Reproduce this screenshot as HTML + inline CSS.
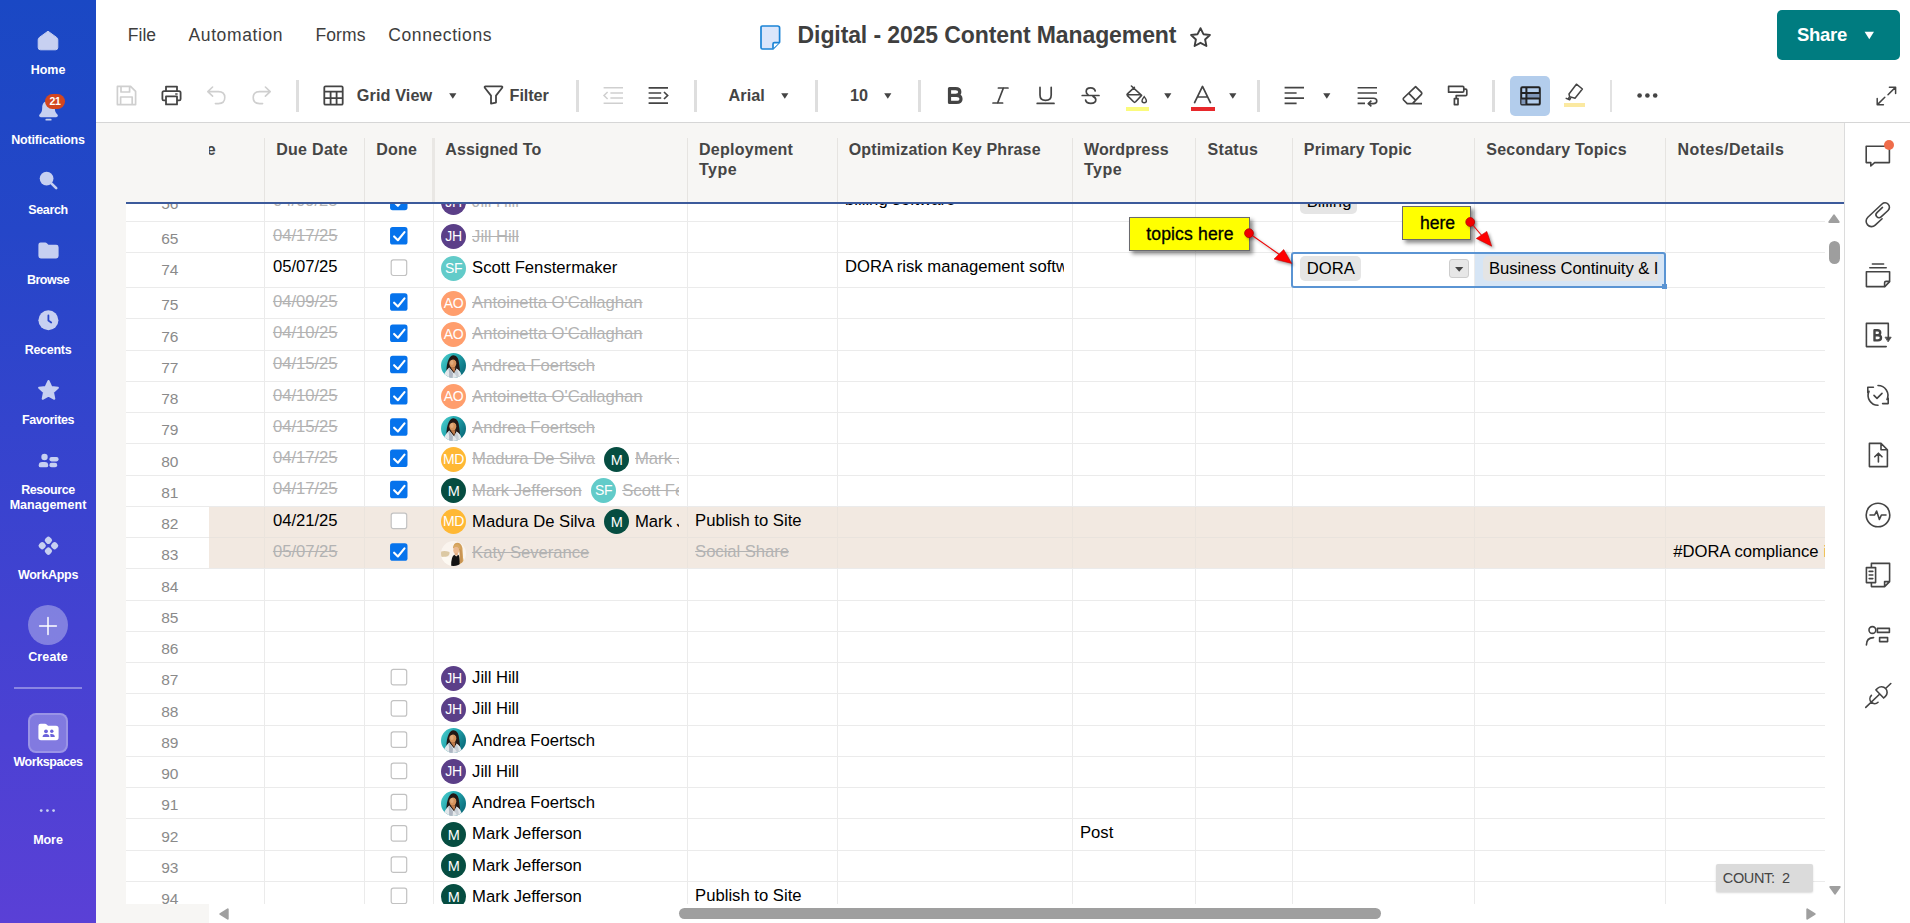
<!DOCTYPE html>
<html><head><meta charset="utf-8"><title>Digital - 2025 Content Management</title>
<style>
*{box-sizing:border-box;margin:0;padding:0}
html,body{width:1910px;height:923px;overflow:hidden;background:#fff;font-family:"Liberation Sans",sans-serif;}
body{position:relative}
.t{position:absolute;white-space:nowrap;line-height:1;}
.a{position:absolute}
.st{text-decoration:line-through}
svg{position:absolute;overflow:visible}
.sep{position:absolute;top:80px;width:3px;height:32px;background:#dedede}
.hl{position:absolute;left:126px;width:1699px;height:1px;background:#ebebeb}
.vl{position:absolute;top:204px;width:1px;height:701px;background:#ebebeb}
.av{position:absolute;width:25px;height:25px;border-radius:50%;color:#fff;font-size:13px;text-align:center;line-height:24.6px;letter-spacing:-0.4px}
.cb{position:absolute;left:390px;width:17.2px;height:17.6px;border-radius:2.5px}
.cb.on{background:#0673ec}
.cb.off{background:#fff;border:1px solid #c9c9c9}
</style></head><body>
<div class="a" style="left:0;top:0;width:96px;height:923px;background:linear-gradient(180deg,#1a48c4 0%,#2546c8 25%,#3a43cf 55%,#4c41d3 80%,#5a40d6 100%)"></div>
<svg style="left:37px;top:30px" width="22" height="21" viewBox="0 0 22 21"><path d="M11 1.2 L19.6 7.4 Q20.8 8.3 20.8 9.8 V17.5 Q20.8 19.8 18.5 19.8 H3.5 Q1.2 19.8 1.2 17.5 V9.8 Q1.2 8.3 2.4 7.4 Z" fill="#c7d0f1" stroke="#c7d0f1" stroke-width="1" stroke-linejoin="round"/></svg>
<span id="t1" class="t " style="left:48.00px;top:64.32px;font-size:12.5px;color:#fff;font-weight:700;letter-spacing:-0.022px;transform:translateX(-50%);">Home</span>
<svg style="left:38px;top:100px" width="21" height="22" viewBox="0 0 21 22"><path d="M10.5 0.8 C6.2 0.8 4.2 4 4.2 7.8 C4.2 11.5 3.2 13 1.6 14.6 C0.6 15.6 1.2 17.2 2.8 17.2 H18.2 C19.8 17.2 20.4 15.6 19.4 14.6 C17.8 13 16.8 11.5 16.8 7.8 C16.8 4 14.8 0.8 10.5 0.8 Z" fill="#c7d0f1"/><rect x="7.4" y="18.7" width="6.2" height="1.9" rx="0.95" fill="#c7d0f1"/></svg>
<div class="a" style="left:45px;top:94px;width:20px;height:15px;border-radius:7.5px;background:#d3461f"></div>
<span id="t2" class="t " style="left:55.00px;top:96.01px;font-size:10.5px;color:#fff;font-weight:700;transform:translateX(-50%);letter-spacing:-0.3px;">21</span>
<span id="t3" class="t " style="left:48.00px;top:134.42px;font-size:12.5px;color:#fff;font-weight:700;letter-spacing:-0.150px;transform:translateX(-50%);">Notifications</span>
<svg style="left:39px;top:171px" width="19" height="19" viewBox="0 0 19 19"><circle cx="7.6" cy="7.6" r="6.9" fill="#c7d0f1"/><path d="M12.6 12.6 L17.2 17.2" stroke="#c7d0f1" stroke-width="2.6" stroke-linecap="round"/></svg>
<span id="t4" class="t " style="left:48.00px;top:204.32px;font-size:12.5px;color:#fff;font-weight:700;letter-spacing:-0.326px;transform:translateX(-50%);">Search</span>
<svg style="left:38px;top:242px" width="21" height="17" viewBox="0 0 21 17"><path d="M2.6 0.6 H7.2 Q8.2 0.6 8.9 1.3 L9.9 2.3 Q10.4 2.8 11.2 2.8 H18.2 Q20.6 2.8 20.6 5.2 V14 Q20.6 16.4 18.2 16.4 H2.8 Q0.4 16.4 0.4 14 V2.8 Q0.4 0.6 2.6 0.6 Z" fill="#c7d0f1"/></svg>
<span id="t5" class="t " style="left:48.00px;top:274.22px;font-size:12.5px;color:#fff;font-weight:700;letter-spacing:-0.485px;transform:translateX(-50%);">Browse</span>
<svg style="left:38px;top:310px" width="21" height="21" viewBox="0 0 21 21"><circle cx="10.4" cy="10.2" r="10" fill="#c7d0f1"/><path d="M10.4 5.4 V10.6 L13.2 12.6" stroke="#2a46ca" stroke-width="1.8" fill="none" stroke-linecap="round" stroke-linejoin="round"/></svg>
<span id="t6" class="t " style="left:48.00px;top:344.12px;font-size:12.5px;color:#fff;font-weight:700;letter-spacing:-0.270px;transform:translateX(-50%);">Recents</span>
<svg style="left:37px;top:379px" width="23" height="23" viewBox="0 0 23 23"><path d="M11.5 2 L14.3 8 L20.9 8.8 L16 13.3 L17.3 19.8 L11.5 16.6 L5.7 19.8 L7 13.3 L2.1 8.8 L8.7 8 Z" fill="#c7d0f1" stroke="#c7d0f1" stroke-width="2" stroke-linejoin="round"/></svg>
<span id="t7" class="t " style="left:48.00px;top:414.22px;font-size:12.5px;color:#fff;font-weight:700;letter-spacing:-0.371px;transform:translateX(-50%);">Favorites</span>
<svg style="left:38px;top:452px" width="21" height="17" viewBox="0 0 21 17"><circle cx="6.5" cy="5" r="3.2" fill="#c7d0f1"/><path d="M0.7 13.4 Q0.7 10 4.2 10 H6.8 Q10.2 10 10.2 13.4 Q10.2 15.3 8.4 15.3 H2.5 Q0.7 15.3 0.7 13.4 Z" fill="#c7d0f1"/><rect x="11.4" y="4.9" width="9.2" height="4.5" rx="2.1" fill="#c7d0f1"/><rect x="11.4" y="10.8" width="7.8" height="4.5" rx="2.1" fill="#c7d0f1"/></svg>
<span id="t8" class="t " style="left:48.00px;top:484.42px;font-size:12.5px;color:#fff;font-weight:700;letter-spacing:-0.404px;transform:translateX(-50%);">Resource</span>
<span id="t9" class="t " style="left:48.00px;top:499.42px;font-size:12.5px;color:#fff;font-weight:700;letter-spacing:0.034px;transform:translateX(-50%);">Management</span>
<svg style="left:37px;top:536px" width="23" height="20" viewBox="0 0 23 20"><rect x="8.100000000000001" y="1.0" width="6.6" height="6.6" rx="2.5" transform="rotate(45 11.4 4.3)" fill="#c7d0f1"/><rect x="1.9000000000000004" y="6.3999999999999995" width="6.6" height="6.6" rx="2.5" transform="rotate(45 5.2 9.7)" fill="#c7d0f1"/><rect x="14.3" y="6.3999999999999995" width="6.6" height="6.6" rx="2.5" transform="rotate(45 17.6 9.7)" fill="#c7d0f1"/><rect x="8.100000000000001" y="11.8" width="6.6" height="6.6" rx="2.5" transform="rotate(45 11.4 15.1)" fill="#c7d0f1"/></svg>
<span id="t10" class="t " style="left:48.00px;top:569.02px;font-size:12.5px;color:#fff;font-weight:700;letter-spacing:-0.254px;transform:translateX(-50%);">WorkApps</span>
<div class="a" style="left:28px;top:605px;width:40px;height:40px;border-radius:50%;background:rgba(255,255,255,0.33)"></div>
<svg style="left:39px;top:616.6px" width="18" height="18" viewBox="0 0 18 18"><path d="M9 0.6 V17.4 M0.6 9 H17.4" stroke="#fff" stroke-width="1.5" stroke-linecap="round"/></svg>
<span id="t11" class="t " style="left:48.00px;top:651.22px;font-size:12.5px;color:#fff;font-weight:700;letter-spacing:0.138px;transform:translateX(-50%);">Create</span>
<div class="a" style="left:14px;top:687.4px;width:68px;height:2px;background:rgba(255,255,255,0.36)"></div>
<div class="a" style="left:28px;top:713px;width:40px;height:39.5px;border-radius:8px;background:rgba(255,255,255,0.30);border:2px solid rgba(255,255,255,0.2)"></div>
<svg style="left:38px;top:723px" width="21" height="18" viewBox="0 0 21 18"><path d="M2.6 0.8 H7 Q8 0.8 8.7 1.5 L9.5 2.3 Q10 2.8 10.8 2.8 H18 Q20.6 2.8 20.6 5.4 V14.6 Q20.6 17.2 18 17.2 H3 Q0.4 17.2 0.4 14.6 V3 Q0.4 0.8 2.6 0.8 Z" fill="#fff"/><circle cx="8" cy="8.3" r="1.9" fill="#6a62da"/><path d="M4.6 14 Q4.6 10.9 8 10.9 Q11.4 10.9 11.4 14 Z" fill="#6a62da"/><circle cx="13.8" cy="8.3" r="1.7" fill="#6a62da"/><path d="M12.2 11 Q16.8 10.4 16.8 14 H12.6 Z" fill="#6a62da"/></svg>
<span id="t12" class="t " style="left:48.00px;top:755.82px;font-size:12.5px;color:#fff;font-weight:700;letter-spacing:-0.417px;transform:translateX(-50%);">Workspaces</span>
<svg style="left:39px;top:808px" width="18" height="5" viewBox="0 0 18 5"><circle cx="2.2" cy="2.6" r="1.4" fill="#c7d0f1"/><circle cx="8.4" cy="2.6" r="1.4" fill="#c7d0f1"/><circle cx="14.6" cy="2.6" r="1.4" fill="#c7d0f1"/></svg>
<span id="t13" class="t " style="left:48.00px;top:833.72px;font-size:12.5px;color:#fff;font-weight:700;letter-spacing:-0.031px;transform:translateX(-50%);">More</span>
<span id="t14" class="t " style="left:127.80px;top:26.59px;font-size:17.5px;color:#3d3d3d;letter-spacing:0.037px;">File</span>
<span id="t15" class="t " style="left:188.50px;top:26.59px;font-size:17.5px;color:#3d3d3d;letter-spacing:0.612px;">Automation</span>
<span id="t16" class="t " style="left:315.50px;top:26.59px;font-size:17.5px;color:#3d3d3d;letter-spacing:0.093px;">Forms</span>
<span id="t17" class="t " style="left:388.30px;top:26.59px;font-size:17.5px;color:#3d3d3d;letter-spacing:0.587px;">Connections</span>
<svg style="left:760px;top:24.5px" width="21" height="25" viewBox="0 0 21 25"><path d="M2.4 1 H17.6 Q19.6 1 19.6 3 V17.2 L13 24 H2.4 Q1 24 1 22.4 V2.6 Q1 1 2.4 1 Z" fill="#dbe6fb" stroke="#1b84d6" stroke-width="1.7" stroke-linejoin="round"/><path d="M19.4 17.6 H14.4 Q13 17.6 13 19 V23.6" fill="#fff" stroke="#1b84d6" stroke-width="1.7" stroke-linejoin="round"/></svg>
<span id="t18" class="t " style="left:797.60px;top:23.73px;font-size:23px;color:#3f3f3f;font-weight:700;letter-spacing:-0.102px;">Digital - 2025 Content Management</span>
<svg style="left:1189px;top:25.5px" width="23" height="23" viewBox="0 0 23 23"><path d="M11.5 2.2 L14.4 8.2 L20.9 9 L16.1 13.5 L17.4 20 L11.5 16.8 L5.6 20 L6.9 13.5 L2.1 9 L8.6 8.2 Z" fill="none" stroke="#3f3f3f" stroke-width="1.9" stroke-linejoin="round"/></svg>
<div class="a" style="left:1777px;top:10px;width:123px;height:50px;border-radius:5px;background:#007c80"></div>
<span id="t19" class="t " style="left:1797.00px;top:25.54px;font-size:18.5px;color:#fff;font-weight:700;letter-spacing:-0.310px;">Share</span>
<svg style="left:1864.4px;top:30.6px" width="11" height="9" viewBox="0 0 11 9"><path d="M0.6 0.8 H10 L5.3 8.2 Z" fill="#fff"/></svg>
<div class="a" style="left:96px;top:122px;width:1814px;height:1px;background:#d6d6d6"></div>
<svg style="left:116px;top:85px" width="21" height="21" viewBox="0 0 21 21"><path d="M1.4 1.4 H14.6 L19.6 6.4 V19.6 H1.4 Z M5 1.6 V7 H13.6 V1.6 M4.6 19.4 V12 H16.2 V19.4" fill="none" stroke="#cfcfcf" stroke-width="1.7" stroke-linejoin="round"/></svg>
<svg style="left:161px;top:85px" width="21" height="21" viewBox="0 0 21 21"><path d="M5 6.2 V1.6 H16 V6.2 M5 15.4 H2.8 Q1.4 15.4 1.4 14 V7.8 Q1.4 6.2 3 6.2 H18 Q19.6 6.2 19.6 7.8 V14 Q19.6 15.4 18.2 15.4 H16 M5 11.4 H16 V19.4 H5 Z" fill="none" stroke="#444" stroke-width="1.8" stroke-linejoin="round"/><path d="M14.2 9 H16.6" stroke="#444" stroke-width="1.4"/></svg>
<svg style="left:206px;top:85px" width="21" height="21" viewBox="0 0 21 21"><path d="M6.6 2 L1.8 6.6 L6.6 11.2 M2.4 6.6 H12.4 Q18.8 6.6 18.8 12.6 Q18.8 18.6 12.4 18.6 H9.4" fill="none" stroke="#cfcfcf" stroke-width="1.6" stroke-linecap="round" stroke-linejoin="round"/></svg>
<svg style="left:251px;top:85px" width="21" height="21" viewBox="0 0 21 21"><path d="M14.4 2 L19.2 6.6 L14.4 11.2 M18.6 6.6 H8.6 Q2.2 6.6 2.2 12.6 Q2.2 18.6 8.6 18.6 H11.6" fill="none" stroke="#cfcfcf" stroke-width="1.6" stroke-linecap="round" stroke-linejoin="round"/></svg>
<div class="sep" style="left:296px;width:3px;background:#dedede"></div>
<svg style="left:323px;top:85px" width="21" height="21" viewBox="0 0 21 21"><path d="M2.6 1.3 H18.4 Q19.7 1.3 19.7 2.6 V18.4 Q19.7 19.7 18.4 19.7 H2.6 Q1.3 19.7 1.3 18.4 V2.6 Q1.3 1.3 2.6 1.3 Z M1.3 6.6 H19.7 M1.3 13.1 H19.7 M7.6 6.6 V19.7 M13.6 6.6 V19.7" fill="none" stroke="#444" stroke-width="1.8"/><rect x="1.3" y="1.3" width="18.4" height="5" fill="none"/></svg>
<span id="t20" class="t " style="left:356.80px;top:87.34px;font-size:16.25px;color:#444;font-weight:700;letter-spacing:0.095px;">Grid View</span>
<svg style="left:448.7px;top:93.2px" width="8" height="6" viewBox="0 0 8 6"><path d="M0.2 0.2 H7.4 L3.8 5.8 Z" fill="#444"/></svg>
<svg style="left:483px;top:85px" width="21" height="21" viewBox="0 0 21 21"><path d="M2.6 1.4 H18.4 Q19.8 1.4 19.2 2.8 L13 10.6 V17.6 L8 18.6 V10.6 L1.8 2.8 Q1.2 1.4 2.6 1.4 Z" fill="none" stroke="#444" stroke-width="1.8" stroke-linejoin="round"/></svg>
<span id="t21" class="t " style="left:509.60px;top:87.34px;font-size:16.25px;color:#444;font-weight:700;letter-spacing:-0.103px;">Filter</span>
<div class="sep" style="left:576px;width:3px;background:#dedede"></div>
<svg style="left:603px;top:86px" width="21" height="19" viewBox="0 0 21 19"><path d="M0.6 1.8 H20 M7.4 7 H20 M7.4 12 H20 M0.6 17.2 H20 M4.6 6 L1 9.5 L4.6 13" fill="none" stroke="#cfcfcf" stroke-width="1.5"/></svg>
<svg style="left:648px;top:86px" width="21" height="19" viewBox="0 0 21 19"><path d="M0.6 1.8 H20 M0.6 7 H13.2 M0.6 12 H13.2 M0.6 17.2 H20 M16 6 L19.6 9.5 L16 13" fill="none" stroke="#444" stroke-width="1.7"/></svg>
<div class="sep" style="left:694px;width:3px;background:#dedede"></div>
<span id="t22" class="t " style="left:728.60px;top:87.34px;font-size:16.25px;color:#444;font-weight:700;letter-spacing:-0.002px;">Arial</span>
<svg style="left:780.6px;top:93.2px" width="8" height="6" viewBox="0 0 8 6"><path d="M0.2 0.2 H7.4 L3.8 5.8 Z" fill="#444"/></svg>
<div class="sep" style="left:815px;width:3px;background:#dedede"></div>
<span id="t23" class="t " style="left:850.00px;top:87.34px;font-size:16.25px;color:#444;font-weight:700;letter-spacing:-0.026px;">10</span>
<svg style="left:883.8px;top:93.2px" width="8" height="6" viewBox="0 0 8 6"><path d="M0.2 0.2 H7.4 L3.8 5.8 Z" fill="#444"/></svg>
<div class="sep" style="left:918px;width:3px;background:#dedede"></div>
<svg style="left:947px;top:86px" width="17" height="19" viewBox="0 0 17 19"><path d="M2.5 2.6 H8.6 Q12.8 2.6 12.8 6 Q12.8 9.3 8.6 9.3 H2.5 Z M2.5 9.3 H9.4 Q14 9.3 14 12.9 Q14 16.4 9.4 16.4 H2.5 Z" fill="none" stroke="#444" stroke-width="3.2" stroke-linejoin="round"/></svg>
<svg style="left:992px;top:86px" width="17" height="19" viewBox="0 0 17 19"><path d="M6.4 2 H16 M1 17 H10.6 M11.4 2 L5.6 17" fill="none" stroke="#444" stroke-width="1.7" stroke-linecap="round"/></svg>
<svg style="left:1036px;top:86px" width="19" height="19" viewBox="0 0 19 19"><path d="M4 1.4 V9 Q4 14.4 9.6 14.4 Q15.2 14.4 15.2 9 V1.4 M1.2 17.4 H18" fill="none" stroke="#444" stroke-width="1.7" stroke-linecap="round"/></svg>
<svg style="left:1081px;top:86px" width="19" height="19" viewBox="0 0 19 19"><path d="M14.2 5 Q13.6 1.8 9.6 1.8 Q5.2 1.8 5.2 5.4 Q5.2 7.4 7 8.6 M12 10.4 Q14.8 11.6 14.8 13.8 Q14.8 17.4 9.8 17.4 Q5.2 17.4 4.6 14" fill="none" stroke="#444" stroke-width="1.7" stroke-linecap="round"/><path d="M1.2 9.5 H18" stroke="#444" stroke-width="1.7" stroke-linecap="round"/></svg>
<svg style="left:1126px;top:85px" width="22" height="19" viewBox="0 0 22 19"><path d="M5.4 1 L15.6 10.4 L9.6 16.8 Q8.6 17.8 7.6 16.8 L1.4 10.6 Q0.6 9.6 1.4 8.8 L8.4 2.4 M1.6 9.8 H14.8" fill="none" stroke="#444" stroke-width="1.6" stroke-linejoin="round" stroke-linecap="round"/><path d="M18.2 11.6 Q20.4 14.4 20.4 15.8 Q20.4 17.8 18.2 17.8 Q16 17.8 16 15.8 Q16 14.4 18.2 11.6 Z" fill="none" stroke="#444" stroke-width="1.4"/></svg>
<div class="a" style="left:1125.8px;top:107px;width:23px;height:4px;background:#fbfb7c"></div>
<svg style="left:1163.6px;top:93.2px" width="8" height="6" viewBox="0 0 8 6"><path d="M0.2 0.2 H7.4 L3.8 5.8 Z" fill="#444"/></svg>
<svg style="left:1193px;top:85px" width="19" height="19" viewBox="0 0 19 19"><path d="M1.6 17.6 L9.5 1.4 L17.4 17.6 M4.4 12 H14.6" fill="none" stroke="#444" stroke-width="1.7" stroke-linejoin="round" stroke-linecap="round"/></svg>
<div class="a" style="left:1191px;top:107px;width:24px;height:4px;background:#e8282b"></div>
<svg style="left:1228.6px;top:93.2px" width="8" height="6" viewBox="0 0 8 6"><path d="M0.2 0.2 H7.4 L3.8 5.8 Z" fill="#444"/></svg>
<div class="sep" style="left:1257px;width:3px;background:#dedede"></div>
<svg style="left:1284px;top:86px" width="21" height="19" viewBox="0 0 21 19"><path d="M0.6 1.7 H20 M0.6 7 H12.6 M0.6 12.2 H20 M0.6 17.4 H12.6" fill="none" stroke="#444" stroke-width="1.7"/></svg>
<svg style="left:1322.6px;top:93.2px" width="8" height="6" viewBox="0 0 8 6"><path d="M0.2 0.2 H7.4 L3.8 5.8 Z" fill="#444"/></svg>
<svg style="left:1357px;top:86px" width="21" height="20" viewBox="0 0 21 20"><path d="M0.6 1.7 H20 M0.6 7 H20 M0.6 12.2 H16.4 Q19.8 12.2 19.8 15 Q19.8 17.6 16.4 17.6 H11.4 M0.6 17.4 H8 M14.4 14.6 L11.2 17.6 L14.4 20.4" fill="none" stroke="#444" stroke-width="1.6" stroke-linejoin="round"/></svg>
<svg style="left:1402px;top:85px" width="21" height="20" viewBox="0 0 21 20"><path d="M13.6 1.6 L19.4 7.4 Q20.2 8.4 19.4 9.4 L10.4 18.6 H5.2 L1.6 15 Q0.8 14 1.6 13 Z M6.6 8.2 L13.2 14.8 M10.4 18.6 H20" fill="none" stroke="#444" stroke-width="1.7" stroke-linejoin="round"/></svg>
<svg style="left:1447px;top:85px" width="21" height="21" viewBox="0 0 21 21"><path d="M1.6 1.4 H15.6 Q16.8 1.4 16.8 2.6 V6 Q16.8 7.2 15.6 7.2 H1.6 Z M16.8 4.2 H18.6 Q19.8 4.2 19.8 5.4 V9.4 Q19.8 10.6 18.6 10.6 H9.2 V13.6 M7.4 13.6 H11 V19.6 H7.4 Z" fill="none" stroke="#444" stroke-width="1.7" stroke-linejoin="round"/></svg>
<div class="sep" style="left:1492px;width:3px;background:#dedede"></div>
<div class="a" style="left:1510px;top:76px;width:40px;height:40px;border-radius:5px;background:#b3cdec"></div>
<svg style="left:1519.5px;top:85.5px" width="21" height="20" viewBox="0 0 21 20"><rect x="1.2" y="1.2" width="18.6" height="17.4" rx="1.2" fill="#b3cdec" stroke="#222" stroke-width="2"/><rect x="6.4" y="7" width="13" height="5.4" fill="#7f96b8"/><rect x="1.4" y="12.6" width="5" height="5.6" fill="#7f96b8"/><path d="M6.4 1.2 V18.6 M1.2 7 H19.8 M1.2 12.6 H19.8" fill="none" stroke="#222" stroke-width="2"/></svg>
<svg style="left:1565px;top:83px" width="19" height="19" viewBox="0 0 19 19"><path d="M11.4 1.2 L17.4 6 L10 15.2 L4.6 13.6 L4 11 Z M4.6 13.6 L3.4 15.6 M1.2 15.4 L4.6 16.8 L5.6 15.2" fill="none" stroke="#444" stroke-width="1.5" stroke-linejoin="round" stroke-linecap="round"/></svg>
<div class="a" style="left:1564px;top:103px;width:21px;height:4px;background:#fbe9a1"></div>
<div class="sep" style="left:1610px;width:2px;background:#e2e2e2"></div>
<svg style="left:1637px;top:93px" width="21" height="5" viewBox="0 0 21 5"><circle cx="2.6" cy="2.5" r="2.3" fill="#444"/><circle cx="10.4" cy="2.5" r="2.3" fill="#444"/><circle cx="18.2" cy="2.5" r="2.3" fill="#444"/></svg>
<svg style="left:1876px;top:85.5px" width="21" height="20" viewBox="0 0 21 20"><path d="M13.4 1.2 H19.6 V7.4 M19.4 1.4 L12 8.8 M7.4 18.8 H1.2 V12.6 M1.4 18.6 L8.8 11.2" fill="none" stroke="#444" stroke-width="1.5" stroke-linecap="round" stroke-linejoin="round"/></svg>
<div class="a" style="left:96px;top:123px;width:1748px;height:800px;background:#f7f6f4"></div>
<div class="a" style="left:126px;top:203px;width:1718px;height:701px;background:#fff"></div>
<div class="a" style="left:209px;top:904px;width:1635px;height:19px;background:#fff"></div>
<div class="a" style="left:264px;top:138px;width:1px;height:64px;background:#e6e4e1"></div>
<div class="a" style="left:364px;top:138px;width:1px;height:64px;background:#e6e4e1"></div>
<div class="a" style="left:433px;top:138px;width:1px;height:64px;background:#e6e4e1"></div>
<div class="a" style="left:687px;top:138px;width:1px;height:64px;background:#e6e4e1"></div>
<div class="a" style="left:837px;top:138px;width:1px;height:64px;background:#e6e4e1"></div>
<div class="a" style="left:1072px;top:138px;width:1px;height:64px;background:#e6e4e1"></div>
<div class="a" style="left:1195px;top:138px;width:1px;height:64px;background:#e6e4e1"></div>
<div class="a" style="left:1292px;top:138px;width:1px;height:64px;background:#e6e4e1"></div>
<div class="a" style="left:1474px;top:138px;width:1px;height:64px;background:#e6e4e1"></div>
<div class="a" style="left:1665px;top:138px;width:1px;height:64px;background:#e6e4e1"></div>
<div class="a" style="left:432px;top:138px;width:3px;height:64px;background:#e9e7e4"></div>
<div class="a" style="left:209px;top:138px;width:20px;height:30px;overflow:hidden">
<span id="t24" class="t " style="left:-2.20px;top:3.56px;font-size:16px;color:#454545;font-weight:700;">e</span>
</div>
<span id="t25" class="t " style="left:276.20px;top:141.56px;font-size:16px;color:#454545;font-weight:700;letter-spacing:0.295px;">Due Date</span>
<span id="t26" class="t " style="left:376.20px;top:141.56px;font-size:16px;color:#454545;font-weight:700;letter-spacing:0.205px;">Done</span>
<span id="t27" class="t " style="left:445.30px;top:141.56px;font-size:16px;color:#454545;font-weight:700;letter-spacing:0.118px;">Assigned To</span>
<span id="t28" class="t " style="left:698.90px;top:141.56px;font-size:16px;color:#454545;font-weight:700;letter-spacing:0.275px;">Deployment</span>
<span id="t29" class="t " style="left:698.90px;top:161.66px;font-size:16px;color:#454545;font-weight:700;letter-spacing:0.514px;">Type</span>
<span id="t30" class="t " style="left:848.70px;top:141.56px;font-size:16px;color:#454545;font-weight:700;letter-spacing:0.153px;">Optimization Key Phrase</span>
<span id="t31" class="t " style="left:1083.90px;top:141.56px;font-size:16px;color:#454545;font-weight:700;letter-spacing:0.191px;">Wordpress</span>
<span id="t32" class="t " style="left:1083.90px;top:161.66px;font-size:16px;color:#454545;font-weight:700;letter-spacing:0.514px;">Type</span>
<span id="t33" class="t " style="left:1207.60px;top:141.56px;font-size:16px;color:#454545;font-weight:700;letter-spacing:0.270px;">Status</span>
<span id="t34" class="t " style="left:1303.80px;top:141.56px;font-size:16px;color:#454545;font-weight:700;letter-spacing:0.200px;">Primary Topic</span>
<span id="t35" class="t " style="left:1486.30px;top:141.56px;font-size:16px;color:#454545;font-weight:700;letter-spacing:0.242px;">Secondary Topics</span>
<span id="t36" class="t " style="left:1677.60px;top:141.56px;font-size:16px;color:#454545;font-weight:700;letter-spacing:0.404px;">Notes/Details</span>
<div class="a" id="gb" style="left:126px;top:204px;width:1699px;height:700px;overflow:hidden">
<div class="a" style="left:-126px;top:-204px;width:1910px;height:923px">
<div class="a" style="left:209px;top:507px;width:1617px;height:61px;background:#f2e9e1"></div>
<div class="hl" style="top:221px;background:#ebebeb"></div>
<div class="hl" style="top:252px;background:#ebebeb"></div>
<div class="hl" style="top:287px;background:#ebebeb"></div>
<div class="hl" style="top:318px;background:#ebebeb"></div>
<div class="hl" style="top:350px;background:#ebebeb"></div>
<div class="hl" style="top:381px;background:#ebebeb"></div>
<div class="hl" style="top:412px;background:#ebebeb"></div>
<div class="hl" style="top:443px;background:#ebebeb"></div>
<div class="hl" style="top:475px;background:#ebebeb"></div>
<div class="hl" style="top:506px;background:#ebebeb"></div>
<div class="hl" style="top:537px;background:#ebebeb"></div>
<div class="hl" style="top:568px;background:#ebebeb"></div>
<div class="hl" style="top:600px;background:#ebebeb"></div>
<div class="hl" style="top:631px;background:#ebebeb"></div>
<div class="hl" style="top:662px;background:#ebebeb"></div>
<div class="hl" style="top:693px;background:#ebebeb"></div>
<div class="hl" style="top:725px;background:#ebebeb"></div>
<div class="hl" style="top:756px;background:#ebebeb"></div>
<div class="hl" style="top:787px;background:#ebebeb"></div>
<div class="hl" style="top:818px;background:#ebebeb"></div>
<div class="hl" style="top:850px;background:#ebebeb"></div>
<div class="hl" style="top:881px;background:#ebebeb"></div>
<div class="a" style="left:209px;top:537px;width:1617px;height:1px;background:#e9e3dd"></div>
<div class="vl" style="left:264px"></div>
<div class="vl" style="left:364px"></div>
<div class="vl" style="left:433px"></div>
<div class="vl" style="left:687px"></div>
<div class="vl" style="left:837px"></div>
<div class="vl" style="left:1072px"></div>
<div class="vl" style="left:1195px"></div>
<div class="vl" style="left:1292px"></div>
<div class="vl" style="left:1474px"></div>
<div class="vl" style="left:1665px"></div>
<div class="a" style="left:264px;top:507px;width:1px;height:61px;background:#ebe4dd"></div>
<div class="a" style="left:364px;top:507px;width:1px;height:61px;background:#ebe4dd"></div>
<div class="a" style="left:433px;top:507px;width:1px;height:61px;background:#ebe4dd"></div>
<div class="a" style="left:687px;top:507px;width:1px;height:61px;background:#ebe4dd"></div>
<div class="a" style="left:837px;top:507px;width:1px;height:61px;background:#ebe4dd"></div>
<div class="a" style="left:1072px;top:507px;width:1px;height:61px;background:#ebe4dd"></div>
<div class="a" style="left:1195px;top:507px;width:1px;height:61px;background:#ebe4dd"></div>
<div class="a" style="left:1292px;top:507px;width:1px;height:61px;background:#ebe4dd"></div>
<div class="a" style="left:1474px;top:507px;width:1px;height:61px;background:#ebe4dd"></div>
<div class="a" style="left:1665px;top:507px;width:1px;height:61px;background:#ebe4dd"></div>
<svg width="0" height="0" style="left:0;top:0"><defs>
<clipPath id="cc"><circle cx="12.5" cy="12.5" r="12.5"/></clipPath>
<linearGradient id="gAF" x1="0" y1="0" x2="1" y2="0.6"><stop offset="0" stop-color="#52d2d0"/><stop offset="0.5" stop-color="#22a6ae"/><stop offset="1" stop-color="#0c6f7e"/></linearGradient>
<linearGradient id="gKS" x1="0" y1="0" x2="1" y2="1"><stop offset="0" stop-color="#f7eee6"/><stop offset="1" stop-color="#ead9c6"/></linearGradient>
<symbol id="avAF" viewBox="0 0 25 25"><g clip-path="url(#cc)">
<rect width="25" height="25" fill="url(#gAF)"/>
<path d="M5.4 18.2 Q5.6 11 7.4 7 Q9.2 2.4 12.6 2.2 Q16.4 2.4 17.6 7.6 Q18.4 12 19 17.8 L13 21 Z" fill="#231815"/>
<ellipse cx="11.8" cy="10.2" rx="3.5" ry="4.7" fill="#d6935c"/>
<ellipse cx="10.9" cy="9.4" rx="1.7" ry="2.6" fill="#e6b184" opacity="0.75"/>
<path d="M8.2 8.8 Q9 4.6 12.4 4.6 Q15.4 5 15.6 9 Q14 6.4 11.8 6.6 Q9.6 6.8 8.2 8.8 Z" fill="#231815"/>
<path d="M9.6 14.2 H14.4 L13.4 19.6 Z" fill="#bf7a49"/>
<path d="M2.4 25 Q2.8 19.6 8.2 14.6 L13.2 20.4 L15.6 15.4 Q20 17.6 21.4 25 Z" fill="#e3e8eb"/>
<path d="M8.2 14.8 L12 20.4 L11.6 25 L8 25 Q8.6 20 7.4 15.6 Z" fill="#aeb6c2"/>
<path d="M15.6 15.6 L13.4 20 L16.4 25 L18 25 Q17.6 19 15.6 15.6 Z" fill="#c6ccd3"/>
</g></symbol>
<symbol id="avKS" viewBox="0 0 25 25"><g clip-path="url(#cc)">
<rect width="25" height="25" fill="#faf4ee"/>
<path d="M0 10.5 Q4 9.5 8.5 11 Q9 14 6 15.5 Q2 16.5 0 15.5 Z" fill="#dcc9a4"/>
<path d="M0 16 Q5 15 10 17 V25 H0 Z" fill="#fdf9f2"/>
<path d="M12 7 Q12.4 1.6 17 1.8 Q21.6 2.6 21.6 10 Q21.8 17 23 22 L18 24 Q19 16 18.4 9 Z" fill="#d2a05a"/>
<ellipse cx="15.2" cy="9.2" rx="2.9" ry="3.7" fill="#ebba91"/>
<path d="M12.2 7.6 Q12.8 3 16.4 3.2 Q19.4 3.8 19 8.4 Q17.4 5.6 15 5.8 Q13.2 6 12.2 7.6 Z" fill="#d9a964"/>
<path d="M13.8 12 H16.8 V14.6 H13.8 Z" fill="#e3ad83"/>
<path d="M10.2 25 Q10 15.6 13.2 13.8 L15.2 15.6 L17.4 13.8 Q19 15.4 18.6 25 Z" fill="#131313"/>
<path d="M18.2 8.6 Q20 14 18.8 22 L21.2 21.2 Q21 13 20.2 8.6 Z" fill="#c79252"/>
</g></symbol>
</defs></svg>
<span id="t37" class="t " style="left:169.80px;top:196px;font-size:15.5px;color:#8a8a8a;transform:translateX(-50%);">56</span>
<span id="t38" class="t st" style="left:272.90px;top:193px;font-size:16.67px;color:#b3b3b3;letter-spacing:-0.013px;">04/09/25</span>
<svg style="left:389px;top:191px" width="20" height="21" viewBox="0 0 20 21"><rect x="1.05" y="1.65" width="17.45" height="17.5" rx="2.6" fill="#0673ec"/><path d="M5.1 11.05 L8.9 14.85 L15.5 6.65" fill="none" stroke="#fff" stroke-width="2.1" stroke-linecap="round" stroke-linejoin="round"/></svg>
<div class="a" style="left:434px;top:186px;width:245.2px;height:36px;overflow:hidden">
<div class="a" style="left:-434px;top:-186px;width:700px;height:40px">
<div class="av" style="left:441px;top:190px;background:#5b3f88;font-size:14px;line-height:24.4px">JH</div>
<span id="t39" class="t st" style="left:472.10px;top:194px;font-size:16.67px;color:#b3b3b3;letter-spacing:-0.039px;">Jill Hill</span>
</div></div>
<span id="t40" class="t " style="left:845.00px;top:191.99px;font-size:16.67px;color:#000;letter-spacing:0.009px;">billing software</span>
<div class="a" style="left:1300px;top:189.6px;width:56.8px;height:24.6px;border-radius:5px;background:#e5e5e5"></div>
<span id="t41" class="t " style="left:1306.70px;top:193.89px;font-size:16.67px;color:#000;letter-spacing:0.055px;">Billing</span>
<span id="t42" class="t " style="left:169.80px;top:231px;font-size:15.5px;color:#8a8a8a;transform:translateX(-50%);">65</span>
<span id="t43" class="t st" style="left:272.90px;top:228px;font-size:16.67px;color:#b3b3b3;letter-spacing:-0.013px;">04/17/25</span>
<svg style="left:389px;top:226px" width="20" height="21" viewBox="0 0 20 21"><rect x="1.05" y="1.05" width="17.45" height="17.5" rx="2.6" fill="#0673ec"/><path d="M5.1 10.45 L8.9 14.25 L15.5 6.05" fill="none" stroke="#fff" stroke-width="2.1" stroke-linecap="round" stroke-linejoin="round"/></svg>
<div class="a" style="left:434px;top:221px;width:245.2px;height:36px;overflow:hidden">
<div class="a" style="left:-434px;top:-221px;width:700px;height:40px">
<div class="av" style="left:441px;top:224px;background:#5b3f88;font-size:14px;line-height:24.4px">JH</div>
<span id="t44" class="t st" style="left:472.10px;top:229px;font-size:16.67px;color:#b3b3b3;letter-spacing:-0.039px;">Jill Hill</span>
</div></div>
<span id="t45" class="t " style="left:169.80px;top:262px;font-size:15.5px;color:#8a8a8a;transform:translateX(-50%);">74</span>
<span id="t46" class="t " style="left:272.90px;top:259px;font-size:16.67px;color:#000;letter-spacing:-0.013px;">05/07/25</span>
<svg style="left:389px;top:257px" width="20" height="21" viewBox="0 0 20 21"><rect x="2.2" y="2.90" width="15.5" height="15.6" rx="2.2" fill="#fff" stroke="#c2c2c2" stroke-width="1.2"/></svg>
<div class="a" style="left:434px;top:252px;width:245.2px;height:36px;overflow:hidden">
<div class="a" style="left:-434px;top:-252px;width:700px;height:40px">
<div class="av" style="left:441px;top:256px;background:#62cbc9;font-size:14px;line-height:24.4px">SF</div>
<span id="t47" class="t " style="left:472.10px;top:260px;font-size:16.67px;color:#000;letter-spacing:0.000px;">Scott Fenstermaker</span>
</div></div>
<span id="t48" class="t " style="left:845.00px;top:258.89px;font-size:16.67px;color:#000;letter-spacing:-0.006px;">DORA risk management softw</span>
<div class="a" style="left:1064px;top:254px;width:8px;height:32px;background:#fff"></div>
<span id="t49" class="t " style="left:169.80px;top:297px;font-size:15.5px;color:#8a8a8a;transform:translateX(-50%);">75</span>
<span id="t50" class="t st" style="left:272.90px;top:294px;font-size:16.67px;color:#b3b3b3;letter-spacing:-0.013px;">04/09/25</span>
<svg style="left:389px;top:292px" width="20" height="21" viewBox="0 0 20 21"><rect x="1.05" y="1.30" width="17.45" height="17.5" rx="2.6" fill="#0673ec"/><path d="M5.1 10.70 L8.9 14.50 L15.5 6.30" fill="none" stroke="#fff" stroke-width="2.1" stroke-linecap="round" stroke-linejoin="round"/></svg>
<div class="a" style="left:434px;top:287px;width:245.2px;height:36px;overflow:hidden">
<div class="a" style="left:-434px;top:-287px;width:700px;height:40px">
<div class="av" style="left:441px;top:291px;background:#ff9e6d;font-size:14px;line-height:24.4px">AO</div>
<span id="t51" class="t st" style="left:472.10px;top:295px;font-size:16.67px;color:#b3b3b3;letter-spacing:-0.012px;">Antoinetta O&#x27;Callaghan</span>
</div></div>
<span id="t52" class="t " style="left:169.80px;top:329px;font-size:15.5px;color:#8a8a8a;transform:translateX(-50%);">76</span>
<span id="t53" class="t st" style="left:272.90px;top:325px;font-size:16.67px;color:#b3b3b3;letter-spacing:-0.013px;">04/10/25</span>
<svg style="left:389px;top:323px" width="20" height="21" viewBox="0 0 20 21"><rect x="1.05" y="1.55" width="17.45" height="17.5" rx="2.6" fill="#0673ec"/><path d="M5.1 10.95 L8.9 14.75 L15.5 6.55" fill="none" stroke="#fff" stroke-width="2.1" stroke-linecap="round" stroke-linejoin="round"/></svg>
<div class="a" style="left:434px;top:318px;width:245.2px;height:36px;overflow:hidden">
<div class="a" style="left:-434px;top:-318px;width:700px;height:40px">
<div class="av" style="left:441px;top:322px;background:#ff9e6d;font-size:14px;line-height:24.4px">AO</div>
<span id="t54" class="t st" style="left:472.10px;top:326px;font-size:16.67px;color:#b3b3b3;letter-spacing:-0.012px;">Antoinetta O&#x27;Callaghan</span>
</div></div>
<span id="t55" class="t " style="left:169.80px;top:360px;font-size:15.5px;color:#8a8a8a;transform:translateX(-50%);">77</span>
<span id="t56" class="t st" style="left:272.90px;top:356px;font-size:16.67px;color:#b3b3b3;letter-spacing:-0.013px;">04/15/25</span>
<svg style="left:389px;top:354px" width="20" height="21" viewBox="0 0 20 21"><rect x="1.05" y="1.80" width="17.45" height="17.5" rx="2.6" fill="#0673ec"/><path d="M5.1 11.20 L8.9 15.00 L15.5 6.80" fill="none" stroke="#fff" stroke-width="2.1" stroke-linecap="round" stroke-linejoin="round"/></svg>
<div class="a" style="left:434px;top:350px;width:245.2px;height:36px;overflow:hidden">
<div class="a" style="left:-434px;top:-350px;width:700px;height:40px">
<svg style="left:441px;top:353px" width="25" height="25" viewBox="0 0 25 25"><use href="#avAF"/></svg>
<span id="t57" class="t st" style="left:472.10px;top:358px;font-size:16.67px;color:#b3b3b3;letter-spacing:-0.021px;">Andrea Foertsch</span>
</div></div>
<span id="t58" class="t " style="left:169.80px;top:391px;font-size:15.5px;color:#8a8a8a;transform:translateX(-50%);">78</span>
<span id="t59" class="t st" style="left:272.90px;top:388px;font-size:16.67px;color:#b3b3b3;letter-spacing:-0.013px;">04/10/25</span>
<svg style="left:389px;top:386px" width="20" height="21" viewBox="0 0 20 21"><rect x="1.05" y="1.05" width="17.45" height="17.5" rx="2.6" fill="#0673ec"/><path d="M5.1 10.45 L8.9 14.25 L15.5 6.05" fill="none" stroke="#fff" stroke-width="2.1" stroke-linecap="round" stroke-linejoin="round"/></svg>
<div class="a" style="left:434px;top:381px;width:245.2px;height:36px;overflow:hidden">
<div class="a" style="left:-434px;top:-381px;width:700px;height:40px">
<div class="av" style="left:441px;top:384px;background:#ff9e6d;font-size:14px;line-height:24.4px">AO</div>
<span id="t60" class="t st" style="left:472.10px;top:389px;font-size:16.67px;color:#b3b3b3;letter-spacing:-0.012px;">Antoinetta O&#x27;Callaghan</span>
</div></div>
<span id="t61" class="t " style="left:169.80px;top:422px;font-size:15.5px;color:#8a8a8a;transform:translateX(-50%);">79</span>
<span id="t62" class="t st" style="left:272.90px;top:419px;font-size:16.67px;color:#b3b3b3;letter-spacing:-0.013px;">04/15/25</span>
<svg style="left:389px;top:417px" width="20" height="21" viewBox="0 0 20 21"><rect x="1.05" y="1.30" width="17.45" height="17.5" rx="2.6" fill="#0673ec"/><path d="M5.1 10.70 L8.9 14.50 L15.5 6.30" fill="none" stroke="#fff" stroke-width="2.1" stroke-linecap="round" stroke-linejoin="round"/></svg>
<div class="a" style="left:434px;top:412px;width:245.2px;height:36px;overflow:hidden">
<div class="a" style="left:-434px;top:-412px;width:700px;height:40px">
<svg style="left:441px;top:416px" width="25" height="25" viewBox="0 0 25 25"><use href="#avAF"/></svg>
<span id="t63" class="t st" style="left:472.10px;top:420px;font-size:16.67px;color:#b3b3b3;letter-spacing:-0.021px;">Andrea Foertsch</span>
</div></div>
<span id="t64" class="t " style="left:169.80px;top:454px;font-size:15.5px;color:#8a8a8a;transform:translateX(-50%);">80</span>
<span id="t65" class="t st" style="left:272.90px;top:450px;font-size:16.67px;color:#b3b3b3;letter-spacing:-0.013px;">04/17/25</span>
<svg style="left:389px;top:448px" width="20" height="21" viewBox="0 0 20 21"><rect x="1.05" y="1.55" width="17.45" height="17.5" rx="2.6" fill="#0673ec"/><path d="M5.1 10.95 L8.9 14.75 L15.5 6.55" fill="none" stroke="#fff" stroke-width="2.1" stroke-linecap="round" stroke-linejoin="round"/></svg>
<div class="a" style="left:434px;top:443px;width:245.2px;height:36px;overflow:hidden">
<div class="a" style="left:-434px;top:-443px;width:700px;height:40px">
<div class="av" style="left:441px;top:447px;background:#ffb834;font-size:14px;line-height:24.4px">MD</div>
<span id="t66" class="t st" style="left:472.10px;top:451px;font-size:16.67px;color:#b3b3b3;letter-spacing:-0.007px;">Madura De Silva</span>
<div class="av" style="left:604px;top:447px;background:#064d41;font-size:14.5px;line-height:26.4px">M</div>
<span id="t67" class="t st" style="left:635.00px;top:451px;font-size:16.67px;color:#b3b3b3;letter-spacing:-0.017px;">Mark Jefferson</span>
</div></div>
<span id="t68" class="t " style="left:169.80px;top:485px;font-size:15.5px;color:#8a8a8a;transform:translateX(-50%);">81</span>
<span id="t69" class="t st" style="left:272.90px;top:481px;font-size:16.67px;color:#b3b3b3;letter-spacing:-0.013px;">04/17/25</span>
<svg style="left:389px;top:479px" width="20" height="21" viewBox="0 0 20 21"><rect x="1.05" y="1.80" width="17.45" height="17.5" rx="2.6" fill="#0673ec"/><path d="M5.1 11.20 L8.9 15.00 L15.5 6.80" fill="none" stroke="#fff" stroke-width="2.1" stroke-linecap="round" stroke-linejoin="round"/></svg>
<div class="a" style="left:434px;top:475px;width:245.2px;height:36px;overflow:hidden">
<div class="a" style="left:-434px;top:-475px;width:700px;height:40px">
<div class="av" style="left:441px;top:478px;background:#064d41;font-size:14.5px;line-height:26.4px">M</div>
<span id="t70" class="t st" style="left:472.10px;top:483px;font-size:16.67px;color:#b3b3b3;letter-spacing:-0.017px;">Mark Jefferson</span>
<div class="av" style="left:591px;top:478px;background:#62cbc9;font-size:14px;line-height:24.4px">SF</div>
<span id="t71" class="t st" style="left:622.20px;top:483px;font-size:16.67px;color:#b3b3b3;letter-spacing:0.000px;">Scott Fenstermaker</span>
</div></div>
<span id="t72" class="t " style="left:169.80px;top:516px;font-size:15.5px;color:#8a8a8a;transform:translateX(-50%);">82</span>
<span id="t73" class="t " style="left:272.90px;top:513px;font-size:16.67px;color:#000;letter-spacing:-0.013px;">04/21/25</span>
<svg style="left:389px;top:511px" width="20" height="21" viewBox="0 0 20 21"><rect x="2.2" y="2.05" width="15.5" height="15.6" rx="2.2" fill="#fff" stroke="#c2c2c2" stroke-width="1.2"/></svg>
<div class="a" style="left:434px;top:506px;width:245.2px;height:36px;overflow:hidden">
<div class="a" style="left:-434px;top:-506px;width:700px;height:40px">
<div class="av" style="left:441px;top:509px;background:#ffb834;font-size:14px;line-height:24.4px">MD</div>
<span id="t74" class="t " style="left:472.10px;top:514px;font-size:16.67px;color:#000;letter-spacing:-0.007px;">Madura De Silva</span>
<div class="av" style="left:604px;top:509px;background:#064d41;font-size:14.5px;line-height:26.4px">M</div>
<span id="t75" class="t " style="left:635.00px;top:514px;font-size:16.67px;color:#000;letter-spacing:-0.017px;">Mark Jefferson</span>
</div></div>
<span id="t76" class="t " style="left:695.10px;top:513px;font-size:16.67px;color:#000;letter-spacing:-0.003px;">Publish to Site</span>
<span id="t77" class="t " style="left:169.80px;top:547px;font-size:15.5px;color:#8a8a8a;transform:translateX(-50%);">83</span>
<span id="t78" class="t st" style="left:272.90px;top:544px;font-size:16.67px;color:#b3b3b3;letter-spacing:-0.013px;">05/07/25</span>
<svg style="left:389px;top:542px" width="20" height="21" viewBox="0 0 20 21"><rect x="1.05" y="1.30" width="17.45" height="17.5" rx="2.6" fill="#0673ec"/><path d="M5.1 10.70 L8.9 14.50 L15.5 6.30" fill="none" stroke="#fff" stroke-width="2.1" stroke-linecap="round" stroke-linejoin="round"/></svg>
<div class="a" style="left:434px;top:537px;width:245.2px;height:36px;overflow:hidden">
<div class="a" style="left:-434px;top:-537px;width:700px;height:40px">
<svg style="left:441px;top:541px" width="25" height="25" viewBox="0 0 25 25"><use href="#avKS"/></svg>
<span id="t79" class="t st" style="left:472.10px;top:545px;font-size:16.67px;color:#b3b3b3;letter-spacing:-0.032px;">Katy Severance</span>
</div></div>
<span id="t80" class="t st" style="left:695.10px;top:544px;font-size:16.67px;color:#b3b3b3;letter-spacing:-0.051px;">Social Share</span>
<div class="a" style="left:1666px;top:537.0px;width:159px;height:31px;overflow:hidden">
<div class="a" style="left:-1666px;top:-537.0px;width:1910px;height:40px">
<span id="t81" class="t " style="left:1673.30px;top:543.99px;font-size:16.67px;color:#000;letter-spacing:-0.001px;">#DORA compliance</span>
<span id="t82" class="t " style="left:1823.60px;top:543.99px;font-size:16.67px;color:#e8912d;">is</span>
</div></div>
<span id="t83" class="t " style="left:169.80px;top:579px;font-size:15.5px;color:#8a8a8a;transform:translateX(-50%);">84</span>
<span id="t84" class="t " style="left:169.80px;top:610px;font-size:15.5px;color:#8a8a8a;transform:translateX(-50%);">85</span>
<span id="t85" class="t " style="left:169.80px;top:641px;font-size:15.5px;color:#8a8a8a;transform:translateX(-50%);">86</span>
<span id="t86" class="t " style="left:169.80px;top:672px;font-size:15.5px;color:#8a8a8a;transform:translateX(-50%);">87</span>
<svg style="left:389px;top:667px" width="20" height="21" viewBox="0 0 20 21"><rect x="2.2" y="2.30" width="15.5" height="15.6" rx="2.2" fill="#fff" stroke="#c2c2c2" stroke-width="1.2"/></svg>
<div class="a" style="left:434px;top:662px;width:245.2px;height:36px;overflow:hidden">
<div class="a" style="left:-434px;top:-662px;width:700px;height:40px">
<div class="av" style="left:441px;top:666px;background:#5b3f88;font-size:14px;line-height:24.4px">JH</div>
<span id="t87" class="t " style="left:472.10px;top:670px;font-size:16.67px;color:#000;letter-spacing:-0.039px;">Jill Hill</span>
</div></div>
<span id="t88" class="t " style="left:169.80px;top:704px;font-size:15.5px;color:#8a8a8a;transform:translateX(-50%);">88</span>
<svg style="left:389px;top:698px" width="20" height="21" viewBox="0 0 20 21"><rect x="2.2" y="2.55" width="15.5" height="15.6" rx="2.2" fill="#fff" stroke="#c2c2c2" stroke-width="1.2"/></svg>
<div class="a" style="left:434px;top:693px;width:245.2px;height:36px;overflow:hidden">
<div class="a" style="left:-434px;top:-693px;width:700px;height:40px">
<div class="av" style="left:441px;top:697px;background:#5b3f88;font-size:14px;line-height:24.4px">JH</div>
<span id="t89" class="t " style="left:472.10px;top:701px;font-size:16.67px;color:#000;letter-spacing:-0.039px;">Jill Hill</span>
</div></div>
<span id="t90" class="t " style="left:169.80px;top:735px;font-size:15.5px;color:#8a8a8a;transform:translateX(-50%);">89</span>
<svg style="left:389px;top:729px" width="20" height="21" viewBox="0 0 20 21"><rect x="2.2" y="2.80" width="15.5" height="15.6" rx="2.2" fill="#fff" stroke="#c2c2c2" stroke-width="1.2"/></svg>
<div class="a" style="left:434px;top:725px;width:245.2px;height:36px;overflow:hidden">
<div class="a" style="left:-434px;top:-725px;width:700px;height:40px">
<svg style="left:441px;top:728px" width="25" height="25" viewBox="0 0 25 25"><use href="#avAF"/></svg>
<span id="t91" class="t " style="left:472.10px;top:733px;font-size:16.67px;color:#000;letter-spacing:-0.021px;">Andrea Foertsch</span>
</div></div>
<span id="t92" class="t " style="left:169.80px;top:766px;font-size:15.5px;color:#8a8a8a;transform:translateX(-50%);">90</span>
<svg style="left:389px;top:761px" width="20" height="21" viewBox="0 0 20 21"><rect x="2.2" y="2.05" width="15.5" height="15.6" rx="2.2" fill="#fff" stroke="#c2c2c2" stroke-width="1.2"/></svg>
<div class="a" style="left:434px;top:756px;width:245.2px;height:36px;overflow:hidden">
<div class="a" style="left:-434px;top:-756px;width:700px;height:40px">
<div class="av" style="left:441px;top:759px;background:#5b3f88;font-size:14px;line-height:24.4px">JH</div>
<span id="t93" class="t " style="left:472.10px;top:764px;font-size:16.67px;color:#000;letter-spacing:-0.039px;">Jill Hill</span>
</div></div>
<span id="t94" class="t " style="left:169.80px;top:797px;font-size:15.5px;color:#8a8a8a;transform:translateX(-50%);">91</span>
<svg style="left:389px;top:792px" width="20" height="21" viewBox="0 0 20 21"><rect x="2.2" y="2.30" width="15.5" height="15.6" rx="2.2" fill="#fff" stroke="#c2c2c2" stroke-width="1.2"/></svg>
<div class="a" style="left:434px;top:787px;width:245.2px;height:36px;overflow:hidden">
<div class="a" style="left:-434px;top:-787px;width:700px;height:40px">
<svg style="left:441px;top:791px" width="25" height="25" viewBox="0 0 25 25"><use href="#avAF"/></svg>
<span id="t95" class="t " style="left:472.10px;top:795px;font-size:16.67px;color:#000;letter-spacing:-0.021px;">Andrea Foertsch</span>
</div></div>
<span id="t96" class="t " style="left:169.80px;top:829px;font-size:15.5px;color:#8a8a8a;transform:translateX(-50%);">92</span>
<svg style="left:389px;top:823px" width="20" height="21" viewBox="0 0 20 21"><rect x="2.2" y="2.55" width="15.5" height="15.6" rx="2.2" fill="#fff" stroke="#c2c2c2" stroke-width="1.2"/></svg>
<div class="a" style="left:434px;top:818px;width:245.2px;height:36px;overflow:hidden">
<div class="a" style="left:-434px;top:-818px;width:700px;height:40px">
<div class="av" style="left:441px;top:822px;background:#064d41;font-size:14.5px;line-height:26.4px">M</div>
<span id="t97" class="t " style="left:472.10px;top:826px;font-size:16.67px;color:#000;letter-spacing:-0.017px;">Mark Jefferson</span>
</div></div>
<span id="t98" class="t " style="left:1080.00px;top:825px;font-size:16.67px;color:#000;letter-spacing:0.000px;">Post</span>
<span id="t99" class="t " style="left:169.80px;top:860px;font-size:15.5px;color:#8a8a8a;transform:translateX(-50%);">93</span>
<svg style="left:389px;top:854px" width="20" height="21" viewBox="0 0 20 21"><rect x="2.2" y="2.80" width="15.5" height="15.6" rx="2.2" fill="#fff" stroke="#c2c2c2" stroke-width="1.2"/></svg>
<div class="a" style="left:434px;top:850px;width:245.2px;height:36px;overflow:hidden">
<div class="a" style="left:-434px;top:-850px;width:700px;height:40px">
<div class="av" style="left:441px;top:853px;background:#064d41;font-size:14.5px;line-height:26.4px">M</div>
<span id="t100" class="t " style="left:472.10px;top:858px;font-size:16.67px;color:#000;letter-spacing:-0.017px;">Mark Jefferson</span>
</div></div>
<span id="t101" class="t " style="left:169.80px;top:891px;font-size:15.5px;color:#8a8a8a;transform:translateX(-50%);">94</span>
<svg style="left:389px;top:886px" width="20" height="21" viewBox="0 0 20 21"><rect x="2.2" y="2.05" width="15.5" height="15.6" rx="2.2" fill="#fff" stroke="#c2c2c2" stroke-width="1.2"/></svg>
<div class="a" style="left:434px;top:881px;width:245.2px;height:36px;overflow:hidden">
<div class="a" style="left:-434px;top:-881px;width:700px;height:40px">
<div class="av" style="left:441px;top:884px;background:#064d41;font-size:14.5px;line-height:26.4px">M</div>
<span id="t102" class="t " style="left:472.10px;top:889px;font-size:16.67px;color:#000;letter-spacing:-0.017px;">Mark Jefferson</span>
</div></div>
<span id="t103" class="t " style="left:695.10px;top:888px;font-size:16.67px;color:#000;letter-spacing:-0.003px;">Publish to Site</span>
<div class="a" style="left:1475px;top:254px;width:189px;height:32px;background:#d6e5f5"></div>
<div class="a" style="left:1291px;top:252px;width:375px;height:36px;border:2px solid #5a94d3;border-radius:3px"></div>
<div class="a" style="left:1300px;top:256.4px;width:60.8px;height:24.6px;border-radius:5px;background:#e5e5e5"></div>
<span id="t104" class="t " style="left:1306.70px;top:260.59px;font-size:16.67px;color:#000;letter-spacing:0.002px;">DORA</span>
<div class="a" style="left:1449px;top:258.5px;width:19.6px;height:19.6px;border-radius:3px;background:#e7e7e7;border:1px solid #cdcdcd"></div>
<svg style="left:1454.8px;top:267px" width="8.4" height="4.8" viewBox="0 0 8.4 4.8"><path d="M0.1 0.1 H8.3 L4.2 4.7 Z" fill="#444"/></svg>
<div class="a" style="left:1482.9px;top:256.4px;width:175.3px;height:24.6px;border-radius:5px 0 0 5px;background:#e4e4e4;overflow:hidden">
<span id="t105" class="t " style="left:6.10px;top:4.19px;font-size:16.67px;color:#000;letter-spacing:-0.085px;">Business Continuity &amp; I</span>
</div>
<div class="a" style="left:1662px;top:284px;width:5px;height:5px;background:#5a94d3"></div>
</div></div>
<div class="a" style="left:1129px;top:217px;width:121px;height:33.5px;background:#ffff00;border:1px solid #6a6a6e;box-shadow:3px 3px 4px rgba(0,0,0,0.45);"></div>
<span id="t106" class="t " style="left:1146.20px;top:225.90px;font-size:17.6px;color:#000;letter-spacing:0.134px;-webkit-text-stroke:0.3px #000;">topics here</span>
<div class="a" style="left:1402px;top:206px;width:69px;height:33.6px;background:#ffff00;border:1px solid #6a6a6e;box-shadow:3px 3px 4px rgba(0,0,0,0.45);"></div>
<span id="t107" class="t " style="left:1419.90px;top:215.10px;font-size:17.6px;color:#000;letter-spacing:-0.041px;-webkit-text-stroke:0.3px #000;">here</span>
<svg style="left:0;top:0;filter:drop-shadow(2px 2px 1.5px rgba(0,0,0,0.35))" width="1910" height="923" viewBox="0 0 1910 923">
<path d="M1249 233.2 L1280 255" stroke="#f00000" stroke-width="1.1"/>
<path d="M1291.7 263.4 L1274.1 259.1 L1283.7 249.6 Z" fill="#ff0000" stroke="#c00000" stroke-width="0.6"/>
<circle cx="1249" cy="233.2" r="4.4" fill="#f00000" stroke="#b80000" stroke-width="0.8"/>
<path d="M1470.2 222 L1483 237" stroke="#f00000" stroke-width="1.1"/>
<path d="M1491.7 246.2 L1476.3 238.5 L1486.8 231.4 Z" fill="#ff0000" stroke="#c00000" stroke-width="0.6"/>
<circle cx="1470.2" cy="222" r="4.4" fill="#f00000" stroke="#b80000" stroke-width="0.8"/>
</svg>
<div class="a" style="left:126px;top:201.6px;width:1718px;height:2px;background:#3c5a9b"></div>
<svg style="left:1828.3px;top:214.4px" width="12" height="9" viewBox="0 0 12 9"><path d="M6 1.2 L10.8 8 H1.2 Z" fill="#9f9f9f" stroke="#9f9f9f" stroke-width="1.8" stroke-linejoin="round"/></svg>
<div class="a" style="left:1829px;top:241px;width:11.2px;height:22.8px;border-radius:5.6px;background:#9e9e9e"></div>
<svg style="left:1828.6px;top:885.6px" width="12" height="9" viewBox="0 0 12 9"><path d="M6 7.8 L10.8 1 H1.2 Z" fill="#9f9f9f" stroke="#9f9f9f" stroke-width="1.8" stroke-linejoin="round"/></svg>
<svg style="left:218.6px;top:908.2px" width="10" height="12" viewBox="0 0 10 12"><path d="M1.2 6 L8.8 1.2 V10.8 Z" fill="#9f9f9f" stroke="#9f9f9f" stroke-width="1.8" stroke-linejoin="round"/></svg>
<svg style="left:1806px;top:908.2px" width="10" height="12" viewBox="0 0 10 12"><path d="M8.8 6 L1.2 1.2 V10.8 Z" fill="#9f9f9f" stroke="#9f9f9f" stroke-width="1.8" stroke-linejoin="round"/></svg>
<div class="a" style="left:679px;top:908px;width:702px;height:10.8px;border-radius:5.4px;background:#9f9f9f"></div>
<div class="a" style="left:1716px;top:864px;width:97px;height:28px;border-radius:2px;background:#dbdbdb;box-shadow:0 1px 2px rgba(0,0,0,0.15)"></div>
<span id="t108" class="t " style="left:1722.80px;top:870.73px;font-size:14.5px;color:#444;letter-spacing:-0.356px;white-space:pre;">COUNT:  2</span>
<div class="a" style="left:1844px;top:123px;width:66px;height:800px;background:#fff;border-left:1px solid #dcdcdc"></div>
<svg style="left:1865px;top:142.5px" width="26" height="26" viewBox="0 0 26 26"><g fill="none" stroke="#444" stroke-width="1.6" stroke-linejoin="round" stroke-linecap="round"><path d="M1.2 3.2 H24.4 V19.6 H9.6 L5.8 23 V19.6 H1.2 Z"/></g></svg>
<div class="a" style="left:1883.6px;top:140px;width:10.4px;height:10.4px;border-radius:50%;background:#ef6c4a"></div>
<svg style="left:1865px;top:201.5px" width="26" height="26" viewBox="0 0 26 26"><g fill="none" stroke="#444" stroke-width="1.6" stroke-linejoin="round" stroke-linecap="round"><g transform="translate(13.4 12.8) rotate(-43)"><path d="M0 5.4 H-9.4 A5.4 5.4 0 0 1 -9.4 -5.4 H10 A4.4 4.4 0 0 1 10 3.4 H0.5 A3 3 0 0 1 0.5 -2.6 H8"/></g></g></svg>
<svg style="left:1865px;top:261.5px" width="26" height="26" viewBox="0 0 26 26"><g fill="none" stroke="#444" stroke-width="1.6" stroke-linejoin="round" stroke-linecap="round"><path d="M7.4 2 H18.6 M4.8 5.8 H21.2 M1.4 9.8 H24.6 V19.6 L19.8 24.6 H1.4 Z"/><path d="M24.4 19.4 H21 Q19.6 19.4 19.6 20.8 V24.4"/></g></svg>
<svg style="left:1865px;top:321.5px" width="26" height="26" viewBox="0 0 26 26"><g fill="none" stroke="#444" stroke-width="1.6" stroke-linejoin="round" stroke-linecap="round"><path d="M23.3 1.4 H1.4 V24.6 H21.2 M23.3 1.4 V16"/><path d="M9.5 8.2 H12.4 Q15.2 8.2 15.2 10.7 Q15.2 13.2 12.4 13.2 H9.5 Z M9.5 13.2 H12.9 Q16 13.2 16 15.8 Q16 18.4 12.9 18.4 H9.5 Z" stroke-width="2.4"/><path d="M20.4 15.2 H26.2 L23.3 19.6 Z" fill="#444" stroke-width="0.8"/></g></svg>
<svg style="left:1865px;top:381.5px" width="26" height="26" viewBox="0 0 26 26"><g fill="none" stroke="#444" stroke-width="1.6" stroke-linejoin="round" stroke-linecap="round"><path d="M13 23.3 A9.9 9.9 0 0 1 4 9.3 M13 3.5 A9.9 9.9 0 0 1 22 17.5 M2.8 10.8 V5.2 H8.4 M23.2 16 V21.6 H17.6 M9 13.4 L12 16.4 L17 11.4"/></g></svg>
<svg style="left:1865px;top:441.5px" width="26" height="26" viewBox="0 0 26 26"><g fill="none" stroke="#444" stroke-width="1.6" stroke-linejoin="round" stroke-linecap="round"><path d="M4.4 1.4 H16 L22.4 7.8 V24.6 H4.4 Z M16 1.6 V7.8 H22.2 M13.4 20 V11.4 M9.8 14.8 L13.4 11.2 L17 14.8"/></g></svg>
<svg style="left:1865px;top:501.5px" width="26" height="26" viewBox="0 0 26 26"><g fill="none" stroke="#444" stroke-width="1.6" stroke-linejoin="round" stroke-linecap="round"><circle cx="13" cy="13" r="11.8"/><path d="M5 13 H9.6 L11.6 9 L14.4 17.4 L16.4 13 H21"/></g></svg>
<svg style="left:1865px;top:561.5px" width="26" height="26" viewBox="0 0 26 26"><g fill="none" stroke="#444" stroke-width="1.6" stroke-linejoin="round" stroke-linecap="round"><path d="M6.4 5.6 V1.4 H24.6 V19.6 L19.6 24.6 H6.4 V20.6 M24.4 19.6 H19.6 V24.4 M1.4 5.6 H10.6 V20.6 H1.4 Z M4.2 9.4 H7.8 M4.2 13 H7.8 M4.2 16.6 H7.8"/></g></svg>
<svg style="left:1865px;top:621.5px" width="26" height="26" viewBox="0 0 26 26"><g fill="none" stroke="#444" stroke-width="1.6" stroke-linejoin="round" stroke-linecap="round"><circle cx="7.4" cy="8" r="3.4"/><path d="M1.4 23 Q1.4 15.6 8.6 15.6 M12.4 6.4 H24.4 V10.4 H12.4 Z M14.6 15.6 H22.6 V19.6 H14.6 Z"/></g></svg>
<svg style="left:1865px;top:681.5px" width="26" height="26" viewBox="0 0 26 26"><g fill="none" stroke="#444" stroke-width="1.6" stroke-linejoin="round" stroke-linecap="round"><g transform="translate(13.2 13.5) rotate(-43.6)"><path d="M-17.2 0 H2.2 M-4.8 -4.8 A4.8 4.8 0 0 0 -4.8 4.8 M2.2 -5.6 V5.6 M2.2 -5.6 H4.6 A5.6 5.6 0 0 1 4.6 5.6 H2.2 M10.2 0 H17.4"/></g></g></svg>
</body></html>
